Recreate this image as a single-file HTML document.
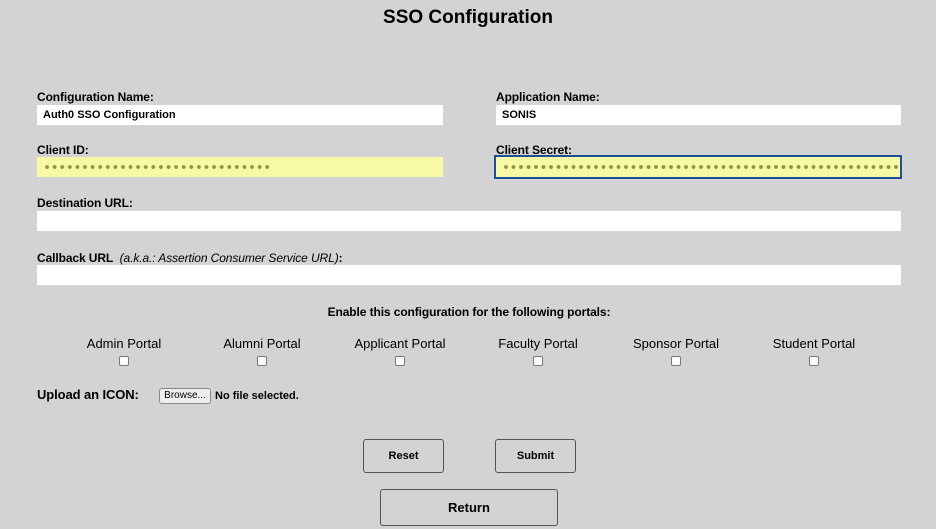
<!DOCTYPE html>
<html><head><style>
*{margin:0;padding:0;box-sizing:border-box}
body{width:936px;height:529px;background:#d3d3d3;font-family:"Liberation Sans",sans-serif;color:#000;position:relative;overflow:hidden}
.a{position:absolute}
.lbl{font-size:12px;font-weight:bold;letter-spacing:-0.1px}
.inp{position:absolute;background:#fff;height:20px;font-size:11px;font-weight:bold;padding:4px 6px;line-height:12px}
.y{background:#f7f9a5}
.dots{position:absolute;height:6px;top:7px;background:radial-gradient(circle at 3px 3px,#8e9640 1.7px,transparent 2.2px) 0 0/7.6px 6px repeat-x}
.pl{position:absolute;font-size:13px;text-align:center;width:130px;top:336px}
.cb{position:absolute;width:10px;height:10px;top:356px;background:#fff;border:1px solid #777;border-radius:2px}
.btn{position:absolute;border:1px solid #555;border-radius:3px;background:#d3d3d3;font-size:12px;font-weight:bold;text-align:center}
</style></head><body>
<div class="a" style="left:0;width:936px;top:7px;text-align:center;font-size:19px;font-weight:bold">SSO Configuration</div>

<div class="a lbl" style="left:37px;top:90px">Configuration Name:</div>
<div class="inp" style="left:37px;top:105px;width:406px">Auth0 SSO Configuration</div>
<div class="a lbl" style="left:496px;top:90px">Application Name:</div>
<div class="inp" style="left:496px;top:105px;width:405px">SONIS</div>

<div class="a lbl" style="left:37px;top:143px">Client ID:</div>
<div class="inp y" style="left:37px;top:157px;width:406px"><div class="dots" style="left:7px;width:228px"></div></div>
<div class="a lbl" style="left:496px;top:143px">Client Secret:</div>
<div class="inp y" style="left:494px;top:155px;width:408px;height:24px;border:2px solid #1a4f9a"><div class="dots" style="left:7px;top:7px;width:398px;background-size:7.5px 6px"></div></div>

<div class="a lbl" style="left:37px;top:196px">Destination URL:</div>
<div class="inp" style="left:37px;top:211px;width:864px"></div>

<div class="a lbl" style="left:37px;top:251px">Callback URL&nbsp; <span style="font-weight:normal;font-style:italic">(a.k.a.: Assertion Consumer Service URL)</span>:</div>
<div class="inp" style="left:37px;top:265px;width:864px"></div>

<div class="a lbl" style="left:0;width:938px;top:305px;text-align:center">Enable this configuration for the following portals:</div>

<div class="pl" style="left:59px">Admin Portal</div><div class="cb" style="left:119px"></div>
<div class="pl" style="left:197px">Alumni Portal</div><div class="cb" style="left:257px"></div>
<div class="pl" style="left:335px">Applicant Portal</div><div class="cb" style="left:395px"></div>
<div class="pl" style="left:473px">Faculty Portal</div><div class="cb" style="left:533px"></div>
<div class="pl" style="left:611px">Sponsor Portal</div><div class="cb" style="left:671px"></div>
<div class="pl" style="left:749px">Student Portal</div><div class="cb" style="left:809px"></div>

<div class="a lbl" style="left:37px;top:387px;font-size:13px">Upload an ICON:</div>
<div class="a" style="left:159px;top:388px;width:52px;height:16px;border:1px solid #888;border-radius:3px;background:#eee;font-size:10px;line-height:14px;text-align:center">Browse...</div>
<div class="a" style="left:215px;top:390px;font-size:11px;font-weight:bold">No file selected.</div>

<div class="btn" style="left:363px;top:439px;width:81px;height:34px;line-height:32px;font-size:11px">Reset</div>
<div class="btn" style="left:495px;top:439px;width:81px;height:34px;line-height:32px;font-size:11px">Submit</div>
<div class="btn" style="left:380px;top:489px;width:178px;height:37px;line-height:35px;font-size:13px">Return</div>
</body></html>
